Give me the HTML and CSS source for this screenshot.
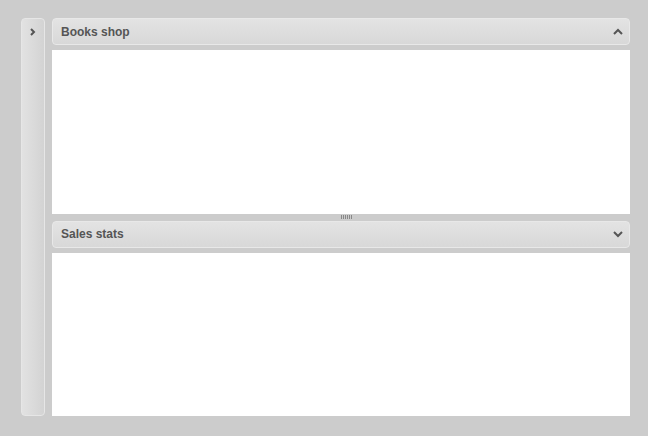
FILE: index.html
```html
<!DOCTYPE html>
<html lang="en">
<head>
    <meta charset="UTF-8">
    <title>Layout</title>
    <link rel="stylesheet" href="styles.css">
</head>
<body>
    <div class="layout">
        <div class="sidebar">
            <svg class="icon" width="8" height="8" viewBox="0 0 8 8"><path d="M2 1 L5 4 L2 7" fill="none" stroke="#555" stroke-width="2"/></svg>
        </div>
        <div class="main">
            <div class="panel">
                <div class="panel-header">
                    <span class="title">Books shop</span>
                    <svg class="icon" width="10" height="8" viewBox="0 0 10 8"><path d="M1 6 L5 2 L9 6" fill="none" stroke="#555" stroke-width="2"/></svg>
                </div>
                <div class="panel-body"></div>
            </div>
            <div class="resizer"><span class="grip"></span></div>
            <div class="panel">
                <div class="panel-header">
                    <span class="title">Sales stats</span>
                    <svg class="icon" width="10" height="8" viewBox="0 0 10 8"><path d="M1 2 L5 6 L9 2" fill="none" stroke="#555" stroke-width="2"/></svg>
                </div>
                <div class="panel-body"></div>
            </div>
        </div>
    </div>
</body>
</html>
```

FILE: styles.css
```css
html, body {
    margin: 0;
    height: 100%;
}
body {
    background-color: #cccccc;
    font-family: 'Liberation Sans', Arial, sans-serif;
    color: #555;
}
.layout {
    display: flex;
    gap: 7px;
    height: 100%;
    box-sizing: border-box;
    padding: 18px 18px 20px 21px;
}
.sidebar {
    width: 24px;
    box-sizing: border-box;
    border: 1px solid #e6e6e6;
    border-radius: 4px;
    background: linear-gradient(to right, #e2e2e2, #d3d3d3);
    display: flex;
    justify-content: center;
    padding-top: 9px;
}
.main {
    flex: 1;
    display: flex;
    flex-direction: column;
}
.panel {
    flex: 1;
    display: flex;
    flex-direction: column;
}
.panel-header {
    height: 27px;
    box-sizing: border-box;
    border: 1px solid #e8e8e8;
    border-radius: 4px;
    background: linear-gradient(to bottom, #e3e3e3, #d8d8d8);
    display: flex;
    align-items: center;
    justify-content: space-between;
    padding: 0 6px 0 8px;
    margin-bottom: 5px;
}
.title {
    font-size: 12px;
    font-weight: bold;
    color: #555;
}
.panel-body {
    flex: 1;
    background-color: #fff;
}
.resizer {
    height: 7px;
    display: flex;
    justify-content: center;
    align-items: center;
}
.grip {
    width: 11px;
    height: 4px;
    margin-left: 10px;
    background: repeating-linear-gradient(to right, #888 0, #888 1px, transparent 1px, transparent 2px);
}
```
